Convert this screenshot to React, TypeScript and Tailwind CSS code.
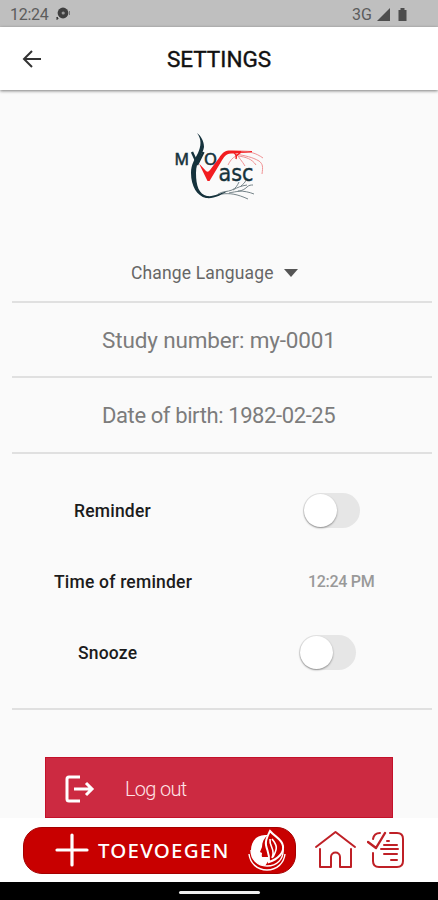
import React, { useState } from "react";

interface ToggleProps {
    label: string;
    checked: boolean;
    onChange: (checked: boolean) => void;
}

const Toggle: React.FC<ToggleProps> = ({ label, checked, onChange }) => (
    <button
        role="switch"
        aria-label={label}
        aria-checked={checked}
        onClick={() => onChange(!checked)}
        className={`flex h-[35px] w-[57px] items-center rounded-full px-px ${checked ? 'justify-end bg-[#cc2a41]' : 'bg-[#e6e6e6]'}`}
    >
        <span className="size-[33px] rounded-full bg-white shadow-[0_1px_2px_rgba(0,0,0,0.4)]" />
    </button>
);

const StatusBar = () => (
    <div className="flex h-[27px] items-center bg-[#bfbfbf] pt-[2px] text-[#5c5c5c]">
        <span className="ml-[10px] w-[46px] text-[16px] leading-none tracking-[-0.3px]">12:24</span>
        <svg width="16" height="14" viewBox="0 0 16 14" className="mb-px">
            <path d="M1 12.5V10l1 1.5z" fill="#333" stroke="#333" />
            <circle cx="7" cy="6" r="5.4" fill="#3f3f3f" />
            <circle cx="7.2" cy="6" r="1.6" fill="#999" />
            <path d="M13.5 4v4" stroke="#777" />
        </svg>
        <span className="ml-[280px] w-[25px] text-[16px] leading-none">3G</span>
        <svg width="32" height="15" viewBox="0 0 32 15" fill="#4d4d4d">
            <path d="M0 14 13 1v13z" />
            <path d="M21.500 3h2V1h4v2h2v11h-8z" />
        </svg>
    </div>
);

const Logo = () => (
    <svg width="110" height="85" viewBox="0 0 110 85" fill="none" className="ml-[165px] shrink-0">
        <text x="9.5" y="39.5" textLength="14.5" lengthAdjust="spacingAndGlyphs" fill="#15323c" stroke="#15323c" strokeWidth="0.6" className="font-['Noto_Sans',sans-serif] text-[17px]">M</text>
        <text x="39" y="39.5" textLength="13" lengthAdjust="spacingAndGlyphs" fill="#15323c" stroke="#15323c" strokeWidth="0.6" className="font-['Noto_Sans',sans-serif] text-[17px]">O</text>
        <text x="53.5" y="56" textLength="35" lengthAdjust="spacingAndGlyphs" fill="#15323c" stroke="#15323c" strokeWidth="0.4" className="font-['DejaVu_Sans',sans-serif] text-[23px]">asc</text>
        {/* dark vessel */}
        <path d="M32 8c4 3 7 8 7 14-1 7-8 14-8 26 0 13 3 21 11 23 7 1 12-3 21-5-7 4-14 8-22 7-9-2-15-12-15-25 0-9 4-14 7-20 3-7 4-13-1-20z" fill="#15323c" />
        <path d="M27 27 32.500 39M38.500 27 32 40" stroke="#15323c" strokeWidth="2.400" />
        <path d="M53 69c5-3 9-2 14-4 4-2 5-4 7-8M68 65c5-3 8-4 14-5M57 69c8-1 15 0 26 5M64 68c8-2 13-1 18-6 2-2 4-2 6-2M73 66c6 0 11 1 16 3M76 61c2-2 4-3 5-6" stroke="#66767c" strokeWidth="0.9" />
        {/* red vessel */}
        <path d="M34 38.500 41 46q2 2 4-1l9-12C58 26 62 25 67 25.500l20 .5v1.500l-20 1C61 28 59 32 56 37L44.500 56h-2z" fill="#f21d20" />
        <path d="M71 28c3 5 6 8 9 13M71 31c-4 2-6 5-8 9M71 29c10 2 16 3 23 7 4 3 4 6 3 13M73 31c8 1 14 3 18 9M76 27c8-1 15 1 22 6" stroke="#ee8688" strokeWidth="0.9" />
        <path d="M68 27c3 2 4 4 3 7M76 27l-5 4" stroke="#f21d20" strokeWidth="1.5" />
    </svg>
);

const BottomBar = () => (
    <div className="flex h-[64px] items-center bg-white pl-[23px]">
        <button className="flex h-[47px] w-[273px] items-center rounded-[19px] border border-[#a40000] bg-[#c80000] pl-[31px] text-white">
            <svg width="34" height="34" viewBox="0 0 34 34" stroke="white" strokeWidth="3.2" strokeLinecap="round">
                <path d="M2 17h30M17 2v30" />
            </svg>
            <span className="ml-[9px] w-[149px] pt-px text-left font-['Noto_Sans',sans-serif] text-[20.5px] leading-none font-medium tracking-[1.2px]">TOEVOEGEN</span>
            {/* profile inside a flame */}
            <svg width="42" height="46" viewBox="0 0 42 46" fill="none">
                <path d="M18 8C9 8 4 15 4 23c0 9 6 15 14 16l4-6v-3h-6c-2 0-1-3-1-4l-2-1 2-5c0-5 2-9 6-12z" fill="white" />
                <path d="M23 4c-2 4-5 9-4 14 1 6 4 9 3 17 9-3 15-9 14-16-1-7-8-9-13-15z" stroke="white" strokeWidth="2" />
                <path d="M23 12c-1 8 6 10 2 19M25 12c5 6 6 9 1 18" stroke="white" strokeWidth="1.6" />
                <path d="M36 22c1 10-6 17-16 17S4 32 4 23M2 27c1 9 8 16 18 16s17-7 18-16" stroke="white" strokeWidth="1.4" />
            </svg>
        </button>
        <button aria-label="Home" className="ml-[18px]">
            <svg width="43" height="40" viewBox="0 0 43 40" fill="none" stroke="#bf2026" strokeWidth="2" strokeLinecap="round" strokeLinejoin="round">
                <path d="M2 17 21.500 2 41 17M6 19v18h11V27c0-6 9-6 9 0v10h11V19" />
            </svg>
        </button>
        <button aria-label="Checklist" className="ml-[10px]">
            <svg width="39" height="40" viewBox="0 0 39 40" fill="none" stroke="#bf2026" strokeWidth="2" strokeLinecap="round" strokeLinejoin="round">
                <path d="M23 3h7q6 0 6 6v22q0 6-6 6H12q-6 0-6-6V23M6 9q1-6 7-6" />
                <path d="M1 12l8 6L18 3" strokeWidth="2.400" />
                <path d="M20 11h2M17 15h13M14 19h17M17 24h13M24 30h6" />
            </svg>
        </button>
    </div>
);

export default function App() {
    const [reminder, setReminder] = useState(false);
    const [snooze, setSnooze] = useState(false);

    return (
        <div className="flex h-[900px] w-[438px] flex-col overflow-hidden bg-[#fafafa] font-[Roboto,sans-serif]">
            <StatusBar />
            <header className="z-10 flex h-[63px] shrink-0 items-center bg-white shadow-[0_1px_3px_rgba(0,0,0,0.5)]">
                <button aria-label="Back" className="ml-[22px] w-[60px]">
                    <svg width="20" height="18" viewBox="0 0 20 18" fill="none" stroke="#333" strokeWidth="2">
                        <path d="M19 9H2M10 1 2 9l8 8" />
                    </svg>
                </button>
                <h1 className="flex-1 pt-[2px] pr-[82px] text-center text-[22.5px] text-[#111] [-webkit-text-stroke:0.4px_#111]">SETTINGS</h1>
            </header>

            <main className="flex min-h-0 flex-1 flex-col overflow-hidden pt-[35px]">
                <Logo />
                <div className="mr-[6px] ml-[12px]">
                    <button className="flex h-[93px] w-full items-center border-b-2 border-[#e0e0e0] pt-[35px] pl-[119px] text-[#666]">
                        <span className="w-[153px] text-left text-[17.5px] tracking-[0.15px] whitespace-nowrap">Change Language</span>
                        <svg width="14" height="8" viewBox="0 0 14 8" fill="#555"><path d="M0 0h14L7 8z" /></svg>
                    </button>
                    <p className="flex h-[75px] items-center border-b-2 border-[#e0e0e0] pt-[2px] pl-[90px] text-[22.500px] tracking-[-0.15px] text-[#7c7c7c]">Study number: my-0001</p>
                    <p className="flex h-[76px] items-center border-b-2 border-[#e0e0e0] pl-[90px] text-[22px] tracking-[-0.4px] text-[#7c7c7c]">Date of birth: 1982-02-25</p>
                    <div className="flex h-[256px] flex-col border-b-2 border-[#e0e0e0] pt-[21px] text-[17.500px] font-medium tracking-[0.2px] text-[#1c1c1c]">
                        <div className="flex h-[71px] items-center">
                            <span className="w-[291px] pt-px pl-[62px]">Reminder</span>
                            <Toggle label="Reminder" checked={reminder} onChange={setReminder} />
                        </div>
                        <div className="flex h-[71px] items-center">
                            <span className="w-[296px] pt-px pl-[42px]">Time of reminder</span>
                            <span className="text-[16px] tracking-[-0.3px] text-[#999]">12:24 PM</span>
                        </div>
                        <div className="flex h-[71px] items-center">
                            <span className="w-[287px] pt-px pl-[66px]">Snooze</span>
                            <Toggle label="Snooze" checked={snooze} onChange={setSnooze} />
                        </div>
                    </div>
                </div>
                <button className="mt-[47px] ml-[45px] flex h-[61px] w-[348px] shrink-0 items-center border border-[#c4112a] bg-[#cc2a41] pt-[2px] pl-[19px] text-[20px] font-light tracking-[-0.7px] text-[#ffe3e6]">
                    <svg width="31" height="28" viewBox="0 0 31 28" fill="none" stroke="white" strokeWidth="3">
                        <path d="M15 2H4q-2 0-2 2v20q0 2 2 2h11M9 14h18M21 8l6 6-6 6" />
                    </svg>
                    <span className="ml-[29px]">Log out</span>
                </button>
            </main>

            <BottomBar />
            <div className="flex h-[18px] shrink-0 items-center justify-center bg-black pt-[2px]">
                <div className="h-[3px] w-[81px] rounded-full bg-[#eee]" />
            </div>
        </div>
    );
}
